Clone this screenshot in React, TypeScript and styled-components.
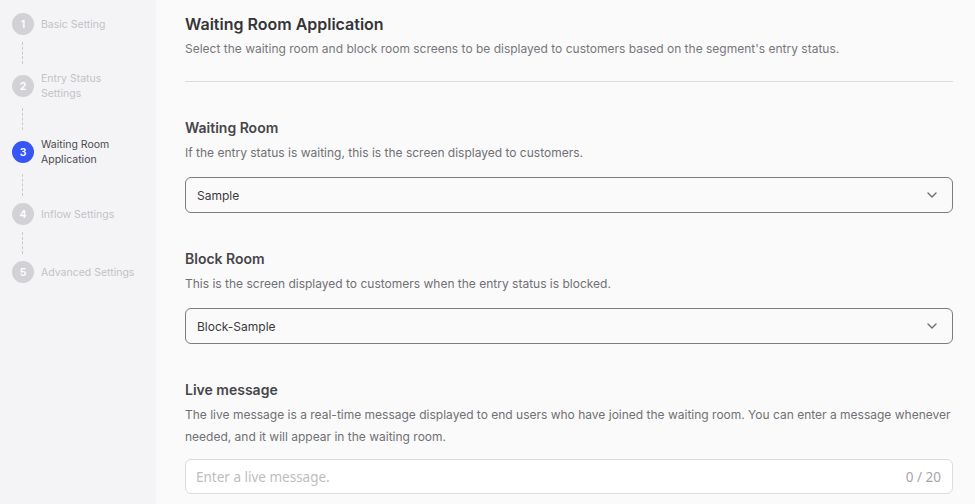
import styled, { createGlobalStyle } from 'styled-components'

const GlobalStyle = createGlobalStyle`
  html, body {
    margin: 0;
    padding: 0;
    background: #fafafa;
    font-family: Inter, "Noto Sans", sans-serif;
  }
  * { box-sizing: border-box; }
`

const Layout = styled.div`
  display: flex;
  width: 975px;
  height: 504px;
  overflow: hidden;
`

const Sidebar = styled.nav`
  width: 156px;
  flex-shrink: 0;
  background: #f4f4f6;
  padding: 13px 0 0 12px;
`

const StepRow = styled.div`
  display: flex;
  align-items: center;
  gap: 7px;
`

const StepCircle = styled.div<{ $active?: boolean }>`
  width: 22px;
  height: 22px;
  border-radius: 50%;
  flex-shrink: 0;
  background: ${p => (p.$active ? '#3656f5' : '#d2d2d6')};
  color: #fff;
  font-size: 10.5px;
  font-weight: 600;
  display: flex;
  align-items: center;
  justify-content: center;
`

const StepLabel = styled.div<{ $active?: boolean }>`
  font-size: 10.5px;
  line-height: 15px;
  color: ${p => (p.$active ? '#4a4a4f' : '#c2c2c6')};
`

const Connector = styled.div`
  width: 11px;
  height: 22px;
  margin: 7px 0;
  border-right: 1px dashed #c9c9cd;
`

const Main = styled.main`
  flex: 1;
  padding: 12px 22px 0 29px;
`

const PageTitle = styled.h1`
  margin: 0;
  font-size: 16px;
  line-height: 24px;
  font-weight: 600;
  color: #353538;
`

const PageDesc = styled.p`
  margin: 3px 0 0;
  font-size: 12px;
  line-height: 20px;
  color: #77777c;
`

const Divider = styled.hr`
  margin: 22px 0 36px;
  border: none;
  border-top: 1px solid #dcdcde;
`

const Section = styled.section`
  & + & { margin-top: 36px; }
`

const SectionTitle = styled.h2`
  margin: 0;
  font-size: 14px;
  line-height: 20px;
  font-weight: 600;
  color: #46464a;
`

const SectionDesc = styled.p<{ $tight?: boolean }>`
  margin: 4px 0 ${p => (p.$tight ? '11px' : '13px')};
  font-size: 12px;
  line-height: 22px;
  color: #707075;
`

const SelectBox = styled.div`
  height: 36px;
  border: 1px solid #7b7b80;
  border-radius: 6px;
  background: #fafafa;
  display: flex;
  align-items: center;
  justify-content: space-between;
  padding: 0 15px 0 11px;
  font-size: 12px;
  color: #3a3a3e;
`

const InputBox = styled.div`
  height: 35px;
  border: 1px solid #dcdcdf;
  border-radius: 6px;
  background: #fff;
  display: flex;
  align-items: center;
  padding: 0 11px 0 10px;
`

const TextInput = styled.input`
  flex: 1;
  border: none;
  outline: none;
  background: transparent;
  font-family: "Noto Sans", "Open Sans", sans-serif;
  font-size: 13.5px;
  color: #333;
  padding: 0;
  &::placeholder { color: #bdbdc1; }
`

const Counter = styled.span`
  font-family: "Noto Sans", "Open Sans", sans-serif;
  font-size: 13.5px;
  color: #a5a5aa;
`

const Chevron = () => (
  <svg width="10" height="6" viewBox="0 0 10 6" fill="none">
    <path d="M1 1l4 4 4-4" stroke="#6e6e73" strokeWidth="1.4" strokeLinecap="round" strokeLinejoin="round" />
  </svg>
)

const steps = [
  ['Basic Setting'],
  ['Entry Status', 'Settings'],
  ['Waiting Room', 'Application'],
  ['Inflow Settings'],
  ['Advanced Settings'],
]

export default function App() {
  const current = 2
  return (
    <>
      <GlobalStyle />
      <Layout>
        <Sidebar>
          {steps.map((lines, i) => (
            <div key={i}>
              {i > 0 && <Connector />}
              <StepRow>
                <StepCircle $active={i === current}>{i + 1}</StepCircle>
                <StepLabel $active={i === current}>
                  {lines.map((l, j) => <div key={j}>{l}</div>)}
                </StepLabel>
              </StepRow>
            </div>
          ))}
        </Sidebar>

        <Main>
          <PageTitle>Waiting Room Application</PageTitle>
          <PageDesc>Select the waiting room and block room screens to be displayed to customers based on the segment's entry status.</PageDesc>
          <Divider />

          <Section>
            <SectionTitle>Waiting Room</SectionTitle>
            <SectionDesc>If the entry status is waiting, this is the screen displayed to customers.</SectionDesc>
            <SelectBox>
              <span>Sample</span>
              <Chevron />
            </SelectBox>
          </Section>

          <Section>
            <SectionTitle>Block Room</SectionTitle>
            <SectionDesc>This is the screen displayed to customers when the entry status is blocked.</SectionDesc>
            <SelectBox>
              <span>Block-Sample</span>
              <Chevron />
            </SelectBox>
          </Section>

          <Section>
            <SectionTitle>Live message</SectionTitle>
            <SectionDesc $tight>
              The live message is a real-time message displayed to end users who have joined the waiting room. You can enter a message whenever needed, and it will appear in the waiting room.
            </SectionDesc>
            <InputBox>
              <TextInput placeholder="Enter a live message." />
              <Counter>0 / 20</Counter>
            </InputBox>
          </Section>
        </Main>
      </Layout>
    </>
  )
}
